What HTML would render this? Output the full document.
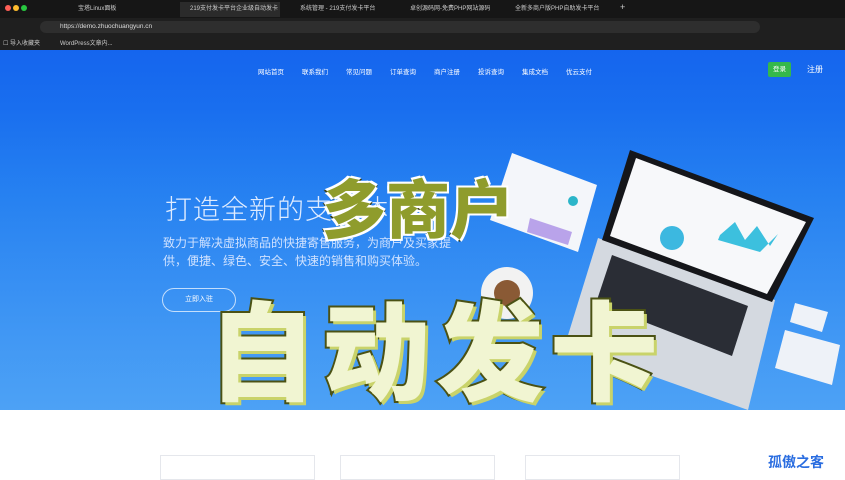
<!DOCTYPE html>
<html><head><meta charset="utf-8"><style>
*{margin:0;padding:0;box-sizing:border-box}
body{width:845px;height:475px;overflow:hidden;position:relative;font-family:"Liberation Sans","Noto Sans CJK SC",sans-serif;background:#fff}
.abs{position:absolute}
.chrome{left:0;top:0;width:845px;height:50px;background:#1f1f1f}
.tabs{top:0;height:18px;width:845px;background:#161616;font-size:6px;color:#ccc}
.tab{position:absolute;top:2px;height:15px;line-height:15px;padding-left:10px}
.addr{left:40px;top:21px;width:720px;height:12px;border-radius:6px;background:#2e2e2e;font-size:6.5px;color:#ddd;line-height:12px;padding-left:20px}
.bm{top:38px;font-size:6px;color:#ccc}
.hero{left:0;top:50px;width:845px;height:360px;background:linear-gradient(180deg,#1565ee 0%,#1f7cf0 40%,#3b98f2 100%);overflow:hidden}
.nav{top:66px;font-size:6.5px;color:#fff}
.big{font-family:"Noto Sans CJK SC",sans-serif;font-weight:900;position:absolute;white-space:nowrap}
</style></head><body>
<div class="abs chrome"></div>
<div class="abs tabs">
 <span class="abs" style="left:5px;top:5px;width:6px;height:6px;border-radius:3px;background:#ff5f57"></span>
 <span class="abs" style="left:13px;top:5px;width:6px;height:6px;border-radius:3px;background:#febc2e"></span>
 <span class="abs" style="left:21px;top:5px;width:6px;height:6px;border-radius:3px;background:#28c840"></span>
 <div class="tab" style="left:68px">宝塔Linux面板</div>
 <div class="tab" style="left:180px;width:100px;background:#2b2b2b">219支付发卡平台企业级自动发卡</div>
 <div class="tab" style="left:290px">系统管理 - 219支付发卡平台</div>
 <div class="tab" style="left:400px">卓创源码网-免费PHP网站源码</div>
 <div class="tab" style="left:505px">全新多商户版PHP自助发卡平台</div>
 <div class="tab" style="left:610px;font-size:9px;top:0">+</div>
</div>
<div class="abs addr">https://demo.zhuochuangyun.cn</div>
<div class="abs bm" style="left:3px">☐ 导入收藏夹</div>
<div class="abs bm" style="left:60px">WordPress文章内...</div>
<div class="abs hero">
 <div class="abs" style="left:0;top:60px;width:845px;height:300px;background:linear-gradient(180deg,rgba(120,180,255,0) 0%,rgba(130,190,255,.25) 100%)"></div>
 <div class="abs" style="left:165px;top:138px;font-size:27px;color:#e0ecff;font-weight:300;letter-spacing:1px">打造全新的支付体验</div>
 <div class="abs" style="left:163px;top:184px;font-size:12px;color:#d0e2ff;line-height:18px;width:290px">致力于解决虚拟商品的快捷寄售服务，为商户及买家提供，便捷、绿色、安全、快速的销售和购买体验。</div>
 <div class="abs" style="left:162px;top:238px;width:74px;height:24px;border:1px solid rgba(255,255,255,.7);border-radius:12px;color:#fff;font-size:7px;text-align:center;line-height:22px">立即入驻</div>
</div>
<svg class="abs" style="left:0;top:0" width="845" height="410" viewBox="0 0 845 410">
 <!-- window mockup -->
 <polygon points="512,153 597,185 578,252 490,220" fill="#f4f6fa"/>
 <polygon points="530,218 572,232 568,245 527,232" fill="#b9a3ea"/>
 <circle cx="573" cy="201" r="5" fill="#2bb5c9"/>
 <!-- coffee -->
 <circle cx="507" cy="293" r="26" fill="#f2f2f2"/>
 <circle cx="507" cy="293" r="13" fill="#8a5a35"/>
 <!-- laptop base -->
 <polygon points="598,238 775,300 748,410 565,345" fill="#d4d9e0"/>
 <polygon points="612,255 748,306 732,356 596,303" fill="#2a2d35"/>
 <!-- screen -->
 <polygon points="630,150 814,218 772,302 602,240" fill="#15161a"/>
 <polygon points="636,158 806,222 767,294 610,236" fill="#f7f8fa"/>
 <polygon points="720,235 735,222 745,240 757,226 770,246 778,234 760,252 718,240" fill="#3cc0de"/>
 <circle cx="672" cy="238" r="12" fill="#3cb8e0"/>
 <!-- right cards -->
 <polygon points="795,303 828,312 822,332 790,322" fill="#eef2f8"/>
 <polygon points="785,330 840,345 832,385 775,368" fill="#eef2f8"/>
</svg>
<div class="abs nav" style="left:258px">网站首页</div>
<div class="abs nav" style="left:302px">联系我们</div>
<div class="abs nav" style="left:346px">常见问题</div>
<div class="abs nav" style="left:390px">订单查询</div>
<div class="abs nav" style="left:434px">商户注册</div>
<div class="abs nav" style="left:478px">投诉查询</div>
<div class="abs nav" style="left:522px">集成文档</div>
<div class="abs nav" style="left:566px">优云支付</div>
<div class="abs" style="left:768px;top:62px;width:23px;height:15px;background:#35b84a;border-radius:2px;color:#fff;font-size:6.5px;text-align:center;line-height:15px">登录</div>
<div class="abs nav" style="left:807px;top:64px;font-size:8px">注册</div>
<div class="abs" style="left:160px;top:455px;width:155px;height:25px;border:1px solid #e5e7ec"></div>
<div class="abs" style="left:340px;top:455px;width:155px;height:25px;border:1px solid #e5e7ec"></div>
<div class="abs" style="left:525px;top:455px;width:155px;height:25px;border:1px solid #e5e7ec"></div>
<div class="big" style="left:322px;top:160px;font-size:64px;color:#8f9c2c;-webkit-text-stroke:3px #3c3f12;paint-order:stroke fill;text-shadow:2px 2px 0 #fff,-2px -2px 0 #fff,2px -2px 0 #fff,-2px 2px 0 #fff">多商户</div>
<div class="big" style="left:208px;top:268px;font-size:108px;color:#f1f5d2;-webkit-text-stroke:4px #4b5214;paint-order:stroke fill;letter-spacing:6px;text-shadow:3px 3px 0 #c9d36a">自动发卡</div>
<div class="abs" style="left:768px;top:452px;font-size:14px;color:#2a6de0;font-weight:bold;font-family:'Noto Sans CJK SC',sans-serif">孤傲之客</div>
</body></html>
